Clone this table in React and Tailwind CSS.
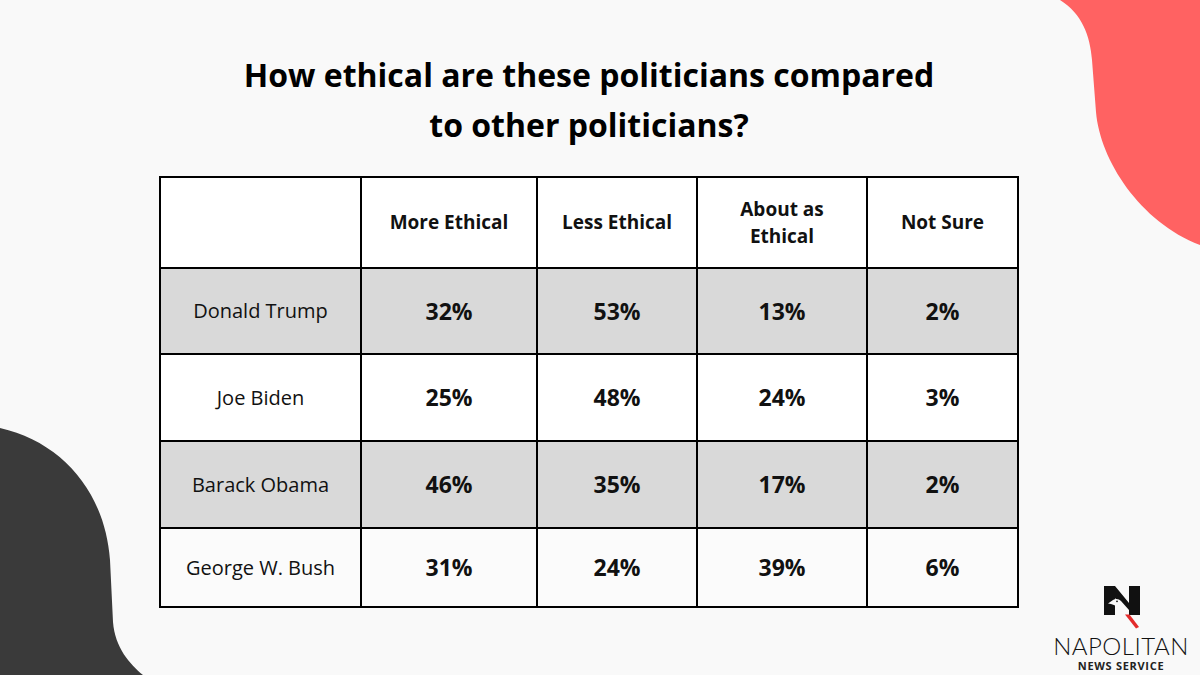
import React from 'react';

const COLUMNS = [
  { key: 'more', label: 'More Ethical', w: 'w-[176px]' },
  { key: 'less', label: 'Less Ethical', w: 'w-[160px]' },
  { key: 'about', label: 'About as Ethical', w: 'w-[170px]' },
  { key: 'notSure', label: 'Not Sure', w: 'w-[151px]' },
];

const ROWS = [
  { name: 'Donald Trump', values: ['32%', '53%', '13%', '2%'], bg: 'bg-[#d9d9d9]', h: 'h-[86px]' },
  { name: 'Joe Biden', values: ['25%', '48%', '24%', '3%'], bg: 'bg-white', h: 'h-[87px]' },
  { name: 'Barack Obama', values: ['46%', '35%', '17%', '2%'], bg: 'bg-[#d9d9d9]', h: 'h-[87px]' },
  { name: 'George W. Bush', values: ['31%', '24%', '39%', '6%'], bg: 'bg-[#fbfbfb]', h: 'h-[79px]' },
];

const Blobs = () => (
  <svg className="absolute inset-0 pointer-events-none" width="1200" height="675" viewBox="0 0 1200 675">
    <path
      d="M1060,0 C1082,14 1090,35 1092,60 L1096,112 C1100,160 1140,222 1200,245 L1200,0 Z"
      fill="#ff6262"
    />
    <path
      d="M0,428 C62,442 105,492 110,560 L113,622 C115,648 130,664 143,675 L0,675 Z"
      fill="#3a3a3a"
    />
  </svg>
);

const Logo = () => (
  <div className="absolute left-[1050px] top-[584px] flex flex-col items-center w-[142px]">
    <svg width="40" height="46" viewBox="0 0 40 46">
      <path d="M3,2 L14,2 L28,19 L28,2 L39,2 L39,31 L28,31 L14,14 L14,31 L3,31 Z" fill="#111" />
      <path d="M7,19.5 L12,16 C14.5,14.2 18,14.6 20,17 L28,26 L28,31 L25,31 L18,24 C15,21.5 11,20 7,19.5 Z" fill="#fafafa" />
      <circle cx="16" cy="17.3" r="0.9" fill="#111" />
      <path d="M24,30.5 L28.5,30.5 L38,43 L35,44.5 Z" fill="#e32b2b" />
    </svg>
    <div
      className="text-[24px] leading-[24px] font-light tracking-[0.5px] text-[#111] mt-[4px]"
      style={{ fontFamily: 'Lato, "Open Sans", sans-serif' }}
    >
      NAPOLITAN
    </div>
    <div
      className="text-[11px] leading-[13px] font-bold tracking-[0.7px] text-[#222] mt-[1px]"
      style={{ fontFamily: '"Open Sans", sans-serif' }}
    >
      NEWS SERVICE
    </div>
  </div>
);

const App = () => {
  return (
    <div className="relative w-[1200px] h-[675px] overflow-hidden bg-[#f9f9f9]">
      <Blobs />
      <div className="relative flex flex-col items-center w-[1178px] pt-[50px]">
        <h1
          className="text-center text-[32px] leading-[50px] font-bold text-black"
          style={{ fontFamily: '"Open Sans", "Liberation Sans", sans-serif' }}
        >
          How ethical are these politicians compared
          <br />
          to other politicians?
        </h1>
        <table
          className="mt-[26px] border-collapse border-2 border-black text-[#111]"
          style={{ fontFamily: '"Open Sans", "Liberation Sans", sans-serif' }}
        >
          <thead>
            <tr className="h-[91px] bg-white">
              <th className="w-[201px] border-2 border-black" />
              {COLUMNS.map(col => (
                <th
                  key={col.key}
                  className={`${col.w} border-2 border-black text-[19px] leading-[27px] font-bold px-2`}
                >
                  {col.key === 'about' ? (
                    <>About as<br />Ethical</>
                  ) : (
                    col.label
                  )}
                </th>
              ))}
            </tr>
          </thead>
          <tbody>
            {ROWS.map(row => (
              <tr key={row.name} className={`${row.h} ${row.bg}`}>
                <td className="border-2 border-black text-center text-[20px] font-normal">{row.name}</td>
                {row.values.map((v, i) => (
                  <td key={i} className="border-2 border-black text-center text-[23px] font-bold">
                    {v}
                  </td>
                ))}
              </tr>
            ))}
          </tbody>
        </table>
      </div>
      <Logo />
    </div>
  );
};

export default App;
